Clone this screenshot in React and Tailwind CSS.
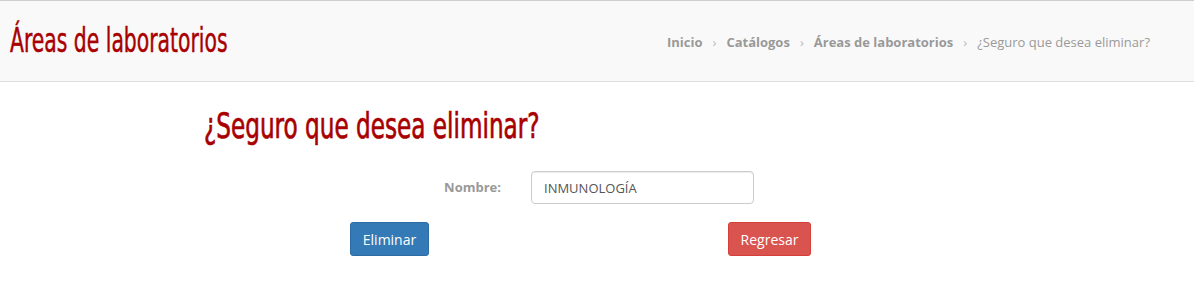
export default function App() {
  const crumbs = ["Inicio", "Catálogos", "Áreas de laboratorios"];
  return (
    <div className="min-h-[290px] bg-white font-['Open_Sans',sans-serif]">
      <header className="flex h-[82px] items-center justify-between border-y border-t-[#cfcfcf] border-b-[#dedede] bg-[#f9f9f9] pl-[10px] pr-[44px]">
        <h1 className="origin-left whitespace-nowrap font-['DejaVu_Sans_Condensed',sans-serif] text-[29px] leading-none text-[#a80000] [-webkit-text-stroke:0.4px_#a80000] [transform:scale(0.78,1.15)]">
          Áreas de laboratorios
        </h1>
        <nav className="flex items-center pt-[3px] text-[13px] text-[#999]">
          {crumbs.map((c) => (
            <span key={c} className="flex items-center">
              <span className="font-bold">{c}</span>
              <span className="px-[10px] text-[#bbb]">›</span>
            </span>
          ))}
          <span>¿Seguro que desea eliminar?</span>
        </nav>
      </header>
      <main className="pt-[26px]">
        <div className="pl-[204px]">
          <h2 className="origin-left whitespace-nowrap font-['DejaVu_Sans_Condensed',sans-serif] text-[31px] leading-[36px] text-[#a80000] [-webkit-text-stroke:0.6px_#a80000] [transform:scale(0.83,1.12)]">
            ¿Seguro que desea eliminar?
          </h2>
        </div>
        <div className="mt-[27px] flex items-center">
          <label className="w-[501px] text-right text-[13px] font-bold text-[#999]">Nombre:</label>
          <input
            readOnly
            value="INMUNOLOGÍA"
            className="ml-[30px] h-[33px] w-[223px] rounded-[4px] border border-[#ccc] px-[12px] text-[13px] text-[#555] shadow-[inset_0_1px_1px_rgba(0,0,0,0.075)] outline-none"
          />
        </div>
        <div className="mt-[18px] flex">
          <button className="ml-[350px] h-[34px] w-[79px] rounded-[3px] border border-[#2e6da4] bg-[#337ab7] text-[14px] text-white">
            Eliminar
          </button>
          <button className="ml-[299px] h-[34px] w-[83px] rounded-[3px] border border-[#d43f3a] bg-[#d9534f] text-[14px] text-white">
            Regresar
          </button>
        </div>
      </main>
    </div>
  );
}
